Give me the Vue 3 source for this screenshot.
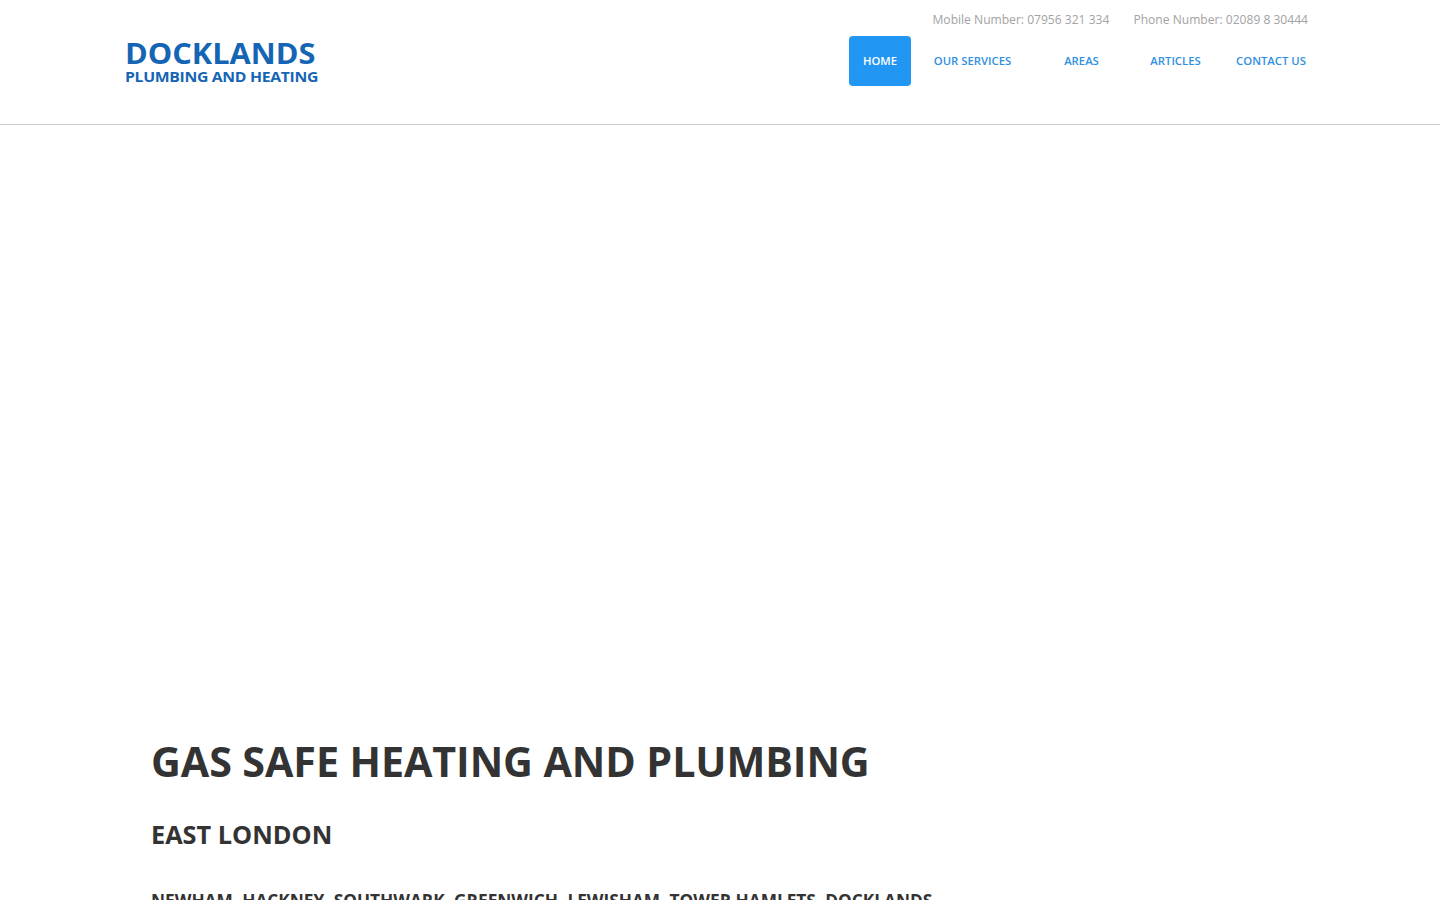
<script setup>
const navItems = [
  { label: 'HOME', width: 62, active: true },
  { label: 'OUR SERVICES', width: 123 },
  { label: 'AREAS', width: 95 },
  { label: 'ARTICLES', width: 93 },
  { label: 'CONTACT US', width: 98 },
]
</script>

<template>
  <div class="page">
    <header class="site-header">
      <a class="logo" href="#">
        <span class="logo-top">DOCKLANDS</span>
        <span class="logo-bottom">PLUMBING AND HEATING</span>
      </a>
      <div class="header-right">
        <div class="phones">
          <span>Mobile Number: 07956 321 334</span>
          <span>Phone Number: 02089 8 30444</span>
        </div>
        <nav class="nav">
          <a
            v-for="item in navItems"
            :key="item.label"
            href="#"
            class="nav-item"
            :class="{ active: item.active }"
            :style="{ width: item.width + 'px' }"
          >{{ item.label }}</a>
        </nav>
      </div>
    </header>
    <main class="hero">
      <h1>GAS SAFE HEATING AND PLUMBING</h1>
      <h2>EAST LONDON</h2>
      <h3>NEWHAM, HACKNEY, SOUTHWARK, GREENWICH, LEWISHAM, TOWER HAMLETS, DOCKLANDS</h3>
    </main>
  </div>
</template>

<style>
html, body { margin: 0; background: #fff; overflow: hidden; }
</style>

<style scoped>
.page {
  height: 900px;
  overflow: hidden;
  font-family: "Open Sans", "Noto Sans", sans-serif;
  color: #333;
}
.site-header {
  box-sizing: border-box;
  height: 125px;
  border-bottom: 1px solid #ccc;
  padding: 0 120px 0 125px;
  display: flex;
  justify-content: space-between;
  align-items: flex-start;
}
.logo {
  display: flex;
  flex-direction: column;
  text-decoration: none;
  color: #1565b4;
  margin-top: 38px;
}
.logo-top {
  font-size: 28px;
  line-height: 30px;
  font-weight: 700;
  transform: scaleX(1.098);
  transform-origin: left center;
}
.logo-bottom {
  font-size: 14.5px;
  line-height: 17px;
  font-weight: 700;
  letter-spacing: -0.3px;
  transform: scaleX(1.087);
  transform-origin: left center;
}
.header-right {
  display: flex;
  flex-direction: column;
  align-items: flex-end;
}
.phones {
  display: flex;
  gap: 24px;
  padding: 11px 12px 0 0;
  font-size: 12.08px;
  line-height: 17px;
  color: #a3a3a3;
}
.nav {
  display: flex;
  margin-top: 8px;
}
.nav-item {
  box-sizing: border-box;
  height: 50px;
  padding-bottom: 2px;
  display: flex;
  align-items: center;
  justify-content: center;
  border-radius: 4px;
  font-size: 11.3px;
  font-weight: 600;
  text-decoration: none;
  color: #2f8fe0;
}
.nav-item.active {
  background: #2196f3;
  color: #fff;
}
.hero {
  padding: 608px 0 0 151px;
}
.hero h1 {
  margin: 0;
  font-size: 41.25px;
  line-height: 56px;
  font-weight: 700;
  letter-spacing: -0.1px;
}
.hero h2 {
  margin: 29px 0 0;
  font-size: 25.3px;
  line-height: 32px;
  font-weight: 700;
}
.hero h3 {
  margin: 38px 0 0;
  font-size: 17.27px;
  line-height: 26px;
  font-weight: 700;
  white-space: nowrap;
}
</style>
